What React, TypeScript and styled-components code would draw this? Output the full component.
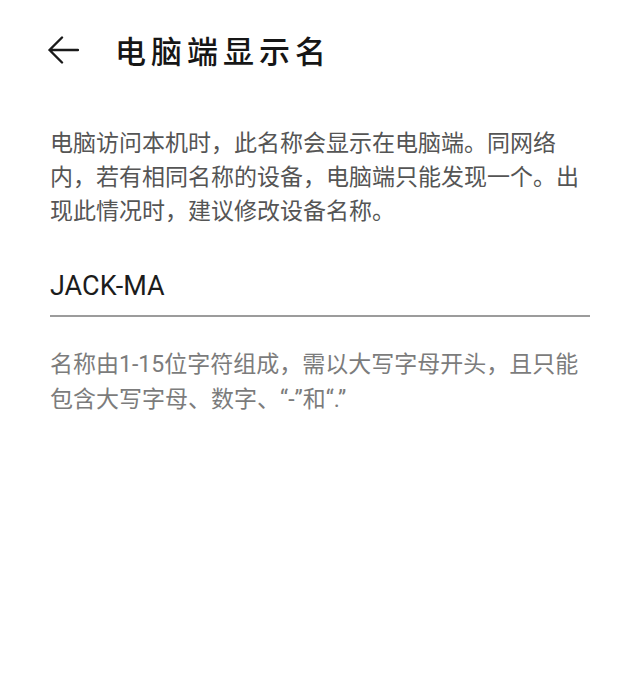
import React from "react";
import styled, { createGlobalStyle } from "styled-components";

const GlobalStyle = createGlobalStyle`
  html, body {
    margin: 0;
    padding: 0;
    background: #ffffff;
  }
  body {
    font-family: "Roboto", "Noto Sans CJK SC", sans-serif;
  }
`;

const Page = styled.div`
  width: 640px;
  min-height: 685px;
  background: #ffffff;
  display: flex;
  flex-direction: column;
`;

const Header = styled.header`
  height: 98px;
  display: flex;
  align-items: center;
  padding-left: 47px;
  gap: 36px;
`;

const BackButton = styled.button`
  width: 32px;
  height: 28px;
  padding: 0;
  border: none;
  background: none;
  display: flex;
  cursor: pointer;
  margin-top: 2px;
`;

const Title = styled.h1`
  margin: 0;
  font-family: "Noto Sans CJK SC", sans-serif;
  font-size: 31px;
  font-weight: 500;
  letter-spacing: 5px;
  color: #161616;
`;

const Content = styled.main`
  padding: 0 50px;
  display: flex;
  flex-direction: column;
`;

const Description = styled.p`
  margin: 29px 0 0;
  font-size: 23px;
  line-height: 34px;
  color: #555555;
`;

const NameInput = styled.input`
  margin-top: 37px;
  height: 40px;
  padding: 0 0 9px;
  border: none;
  border-bottom: 2px solid #9c9c9c;
  outline: none;
  background: transparent;
  font-family: "Roboto", "Noto Sans CJK SC", sans-serif;
  font-size: 27px;
  color: #1c1c1c;
  box-sizing: content-box;
  width: 100%;
`;

const Hint = styled.p`
  margin: 30px 0 0;
  font-size: 23px;
  line-height: 35px;
  color: #7c7c7c;
`;

const BackArrow = () => (
  <svg width="32" height="28" viewBox="0 0 32 28" fill="none">
    <path
      d="M31 14H2.5M15 1.5L2.5 14L15 26.5"
      stroke="#1a1a1a"
      strokeWidth="2.4"
      strokeLinecap="round"
      strokeLinejoin="round"
    />
  </svg>
);

const App: React.FC = () => {
  return (
    <Page>
      <GlobalStyle />
      <Header>
        <BackButton aria-label="返回">
          <BackArrow />
        </BackButton>
        <Title>电脑端显示名</Title>
      </Header>
      <Content>
        <Description>
          电脑访问本机时，此名称会显示在电脑端。同网络内，若有相同名称的设备，电脑端只能发现一个。出现此情况时，建议修改设备名称。
        </Description>
        <NameInput defaultValue="JACK-MA" />
        <Hint>名称由1-15位字符组成，需以大写字母开头，且只能包含大写字母、数字、“-”和“.”</Hint>
      </Content>
    </Page>
  );
};

export default App;
